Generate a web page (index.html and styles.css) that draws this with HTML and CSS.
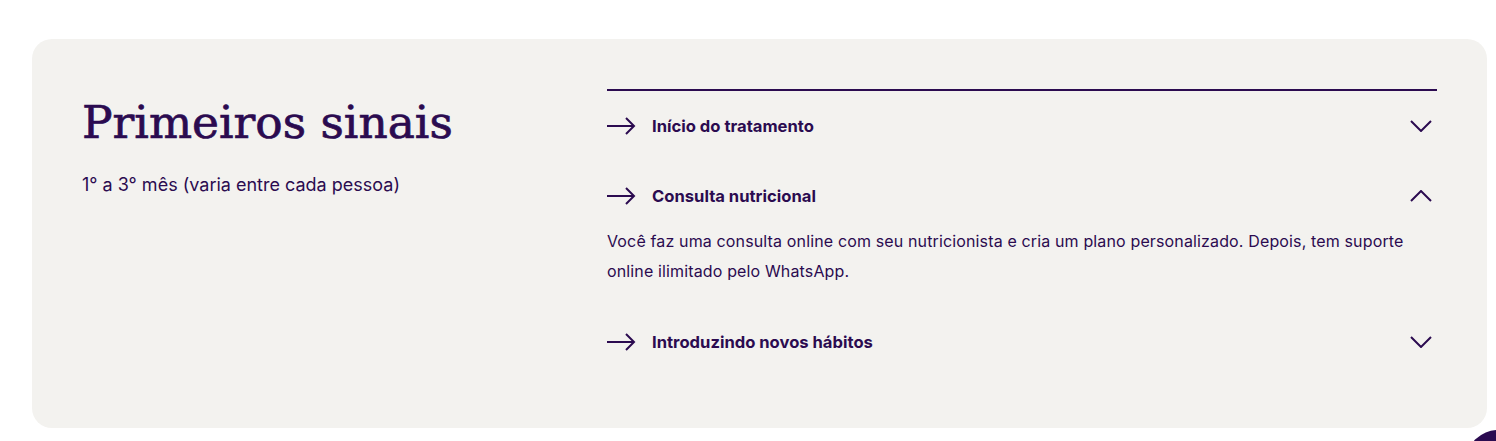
FILE: index.html
```html
<!DOCTYPE html>
<html lang="pt-BR">
<head>
<meta charset="utf-8">
<title>Primeiros sinais</title>
<link rel="stylesheet" href="styles.css">
</head>
<body>
<main class="page">
  <section class="card">
    <div class="intro">
      <h2 class="title">Primeiros sinais</h2>
      <p class="period">1° a 3° mês (varia entre cada pessoa)</p>
    </div>
    <div class="accordion">
      <div class="item">
        <div class="item-head">
          <svg class="arrow" width="29" height="18" viewBox="0 0 29 18" fill="none" stroke="currentColor" stroke-width="2"><path d="M0 9H27M19 1L27 9L19 17"/></svg>
          <span class="item-title">Início do tratamento</span>
          <svg class="chev" width="22" height="12" viewBox="0 0 22 12" fill="none" stroke="currentColor" stroke-width="2"><path d="M1 1L11 11L21 1"/></svg>
        </div>
      </div>
      <div class="item open">
        <div class="item-head">
          <svg class="arrow" width="29" height="18" viewBox="0 0 29 18" fill="none" stroke="currentColor" stroke-width="2"><path d="M0 9H27M19 1L27 9L19 17"/></svg>
          <span class="item-title">Consulta nutricional</span>
          <svg class="chev" width="22" height="12" viewBox="0 0 22 12" fill="none" stroke="currentColor" stroke-width="2"><path d="M1 11L11 1L21 11"/></svg>
        </div>
        <p class="item-body">Você faz uma consulta online com seu nutricionista e cria um plano personalizado. Depois, tem suporte online ilimitado pelo WhatsApp.</p>
      </div>
      <div class="item">
        <div class="item-head">
          <svg class="arrow" width="29" height="18" viewBox="0 0 29 18" fill="none" stroke="currentColor" stroke-width="2"><path d="M0 9H27M19 1L27 9L19 17"/></svg>
          <span class="item-title">Introduzindo novos hábitos</span>
          <svg class="chev" width="22" height="12" viewBox="0 0 22 12" fill="none" stroke="currentColor" stroke-width="2"><path d="M1 1L11 11L21 1"/></svg>
        </div>
      </div>
    </div>
  </section>
  <button class="fab" aria-label="Ajuda"></button>
</main>
</body>
</html>
```
FILE: styles.css
```css
html, body {
  margin: 0;
  padding: 0;
  background: #ffffff;
  overflow: hidden;
}
body {
  font-family: Inter, "Noto Sans", sans-serif;
  color: #2b0b50;
}
.page {
  position: relative;
  height: 441px;
  padding: 39px 9px 0 32px;
  box-sizing: border-box;
  overflow: hidden;
}
.card {
  background: #f3f2ef;
  border-radius: 20px;
  padding: 50px 50px 51px 50px;
  display: grid;
  grid-template-columns: 525px 1fr;
}
.title {
  margin: 7px 0 0 0;
  font-family: "DejaVu Serif", serif;
  font-weight: 400;
  font-size: 45.5px;
  line-height: 54px;
  -webkit-text-stroke: 0.7px #2b0b50;
}
.period {
  margin: 22px 0 0 0;
  font-size: 18px;
  line-height: 26px;
}
.accordion {
  border-top: 2px solid #2b0b50;
}
.item-head {
  display: flex;
  align-items: center;
  padding: 24px 0;
  line-height: 22px;
}
.item.open .item-head {
  padding-bottom: 0;
}
.arrow {
  flex: none;
  display: block;
}
.item-title {
  margin-left: 16px;
  font-size: 16.6px;
  font-weight: 700;
  flex: 1;
}
.chev {
  flex: none;
  display: block;
  margin-right: 5px;
}
.item-body {
  margin: 19px 0 0 0;
  padding-bottom: 21px;
  font-size: 16px;
  line-height: 30px;
  letter-spacing: 0.14px;
}
.fab {
  position: absolute;
  left: 1466px;
  top: 430px;
  width: 64px;
  height: 64px;
  border-radius: 50%;
  border: none;
  background: #2b0b50;
  padding: 0;
}
```
